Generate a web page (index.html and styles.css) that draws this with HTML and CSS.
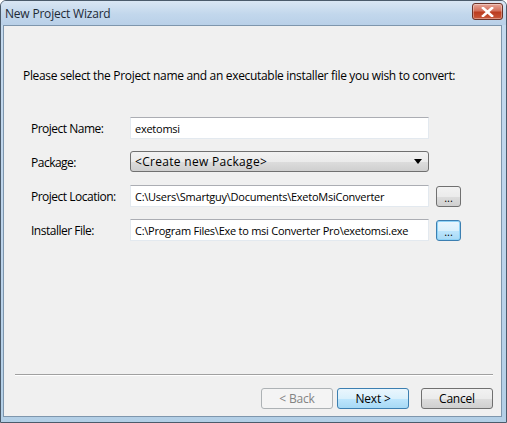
FILE: index.html
```html
<!DOCTYPE html>
<html lang="en">
<head>
    <meta charset="UTF-8">
    <title>New Project Wizard</title>
    <link rel="stylesheet" href="styles.css">
</head>
<body>
    <div class="window">
        <div class="titlebar">
            <span class="title">New Project Wizard</span>
            <span class="close-btn">
                <svg width="13" height="10" viewBox="0 0 13 10">
                    <path d="M2 1 L11 9 M11 1 L2 9" stroke="#fff" stroke-width="2.6" stroke-linecap="square"/>
                </svg>
            </span>
        </div>

        <div class="client">
            <p class="intro">Please select the Project name and an executable installer file you wish to convert:</p>

            <div class="form">
                <label>Project Name:</label>
                <div class="textbox">exetomsi</div>
                <div></div>

                <label>Package:</label>
                <div class="combo">
                    <span>&lt;Create new Package&gt;</span>
                    <svg width="8" height="5" viewBox="0 0 8 5"><path d="M0 0 H8 L4 5 Z" fill="#000"/></svg>
                </div>
                <div></div>

                <label>Project Location:</label>
                <div class="textbox">C:\Users\Smartguy\Documents\ExetoMsiConverter</div>
                <button class="browse">...</button>

                <label>Installer File:</label>
                <div class="textbox">C:\Program Files\Exe to msi Converter Pro\exetomsi.exe</div>
                <button class="browse focused">...</button>
            </div>

            <div class="spacer"></div>

            <div class="separator"></div>

            <div class="nav-buttons">
                <button class="btn disabled">&lt; Back</button>
                <button class="btn default">Next &gt;</button>
                <button class="btn cancel">Cancel</button>
            </div>
        </div>
    </div>
</body>
</html>
```

FILE: styles.css
```css
* {
    margin: 0;
    padding: 0;
    box-sizing: border-box;
}

body {
    font-family: 'Open Sans', 'Liberation Sans', sans-serif;
    font-size: 12px;
    background: #ffffff;
    width: 507px;
    height: 423px;
    overflow: hidden;
}

.window {
    width: 507px;
    height: 423px;
    display: flex;
    flex-direction: column;
    background: linear-gradient(to bottom, #c5daee, #bcd3ea 60%, #b3cfe6);
    border: 1px solid #4b5b6b;
    border-radius: 6px 6px 0 0;
    padding: 0 4px 5px 2px;
}

.titlebar {
    height: 24px;
    display: flex;
    align-items: center;
    justify-content: space-between;
    padding-left: 4px;
    background: linear-gradient(to bottom, #d9e6f3, #c2d7ec 55%, #b9d0e8);
    margin: 0 -4px 0 -2px;
    padding-right: 3px;
    border-radius: 5px 5px 0 0;
}

.title {
    font-size: 12px;
    color: #1e2a36;
    letter-spacing: -0.2px;
}

.close-btn {
    width: 31px;
    height: 17px;
    margin-top: -3px;
    display: flex;
    align-items: center;
    justify-content: center;
    border: 1px solid #6a3229;
    border-radius: 3px;
    background: linear-gradient(to bottom, #e7a698, #d3705c 45%, #bb3c20 55%, #c9583b);
    box-shadow: inset 0 0 0 1px rgba(255, 255, 255, 0.35);
}

.client {
    flex: 1;
    display: flex;
    flex-direction: column;
    background: #f0f0f0;
    border: 1px solid #7e96ad;
    padding: 0 8px 7px 0;
}

.intro {
    margin: 41px 0 0 19px;
    color: #000;
    font-size: 12px;
    letter-spacing: -0.32px;
}

.form {
    display: grid;
    grid-template-columns: 92px 299px 25px;
    grid-auto-rows: 22px;
    column-gap: 7px;
    row-gap: 12px;
    margin: 33px 0 0 27px;
}

.form label {
    display: flex;
    align-items: center;
    color: #000;
    letter-spacing: -0.5px;
}

.textbox {
    display: flex;
    align-items: center;
    padding-left: 4px;
    background: #fff;
    border: 1px solid #e3e9ef;
    border-top-color: #abadb3;
    white-space: nowrap;
    overflow: hidden;
    color: #000;
    font-size: 11px;
    letter-spacing: -0.25px;
}

.combo {
    display: flex;
    align-items: center;
    justify-content: space-between;
    padding: 0 6px 0 4px;
    height: 21px;
    border: 1px solid #707070;
    border-radius: 3px;
    background: linear-gradient(to bottom, #f2f2f2, #ebebeb 50%, #dddddd 51%, #cfcfcf);
    color: #000;
    letter-spacing: 0.3px;
}

.browse {
    width: 25px;
    height: 21px;
    align-self: center;
    font-family: inherit;
    font-size: 11px;
    line-height: 1;
    padding-top: 2px;
    border: 1px solid #707070;
    border-radius: 3px;
    background: linear-gradient(to bottom, #f2f2f2, #ebebeb 50%, #dddddd 51%, #cfcfcf);
    color: #000;
}

.browse.focused {
    border-color: #3c7fb1;
    background: linear-gradient(to bottom, #eaf6fd, #d9f0fc 50%, #bee6fd 51%, #a7d9f5);
    box-shadow: inset 0 0 0 1px #8fd3f7;
}

.spacer {
    flex: 1;
}

.separator {
    margin: 0 0 0 11px;
    height: 2px;
    border-top: 1px solid #a0a0a0;
    border-bottom: 1px solid #ffffff;
}

.nav-buttons {
    display: flex;
    justify-content: flex-end;
    gap: 4px;
    margin-top: 12px;
}

.btn {
    width: 72px;
    height: 21px;
    font-family: inherit;
    font-size: 12px;
    letter-spacing: -0.2px;
    border: 1px solid #707070;
    border-radius: 3px;
    background: linear-gradient(to bottom, #f2f2f2, #ebebeb 50%, #dddddd 51%, #cfcfcf);
    color: #000;
}

.btn.disabled {
    border-color: #adb2b5;
    background: #f4f4f4;
    color: #838383;
}

.btn.default {
    border-color: #3c7fb1;
    background: linear-gradient(to bottom, #eaf6fd, #d9f0fc 50%, #bee6fd 51%, #a7d9f5);
}

.btn.cancel {
    margin-left: 8px;
}
```
